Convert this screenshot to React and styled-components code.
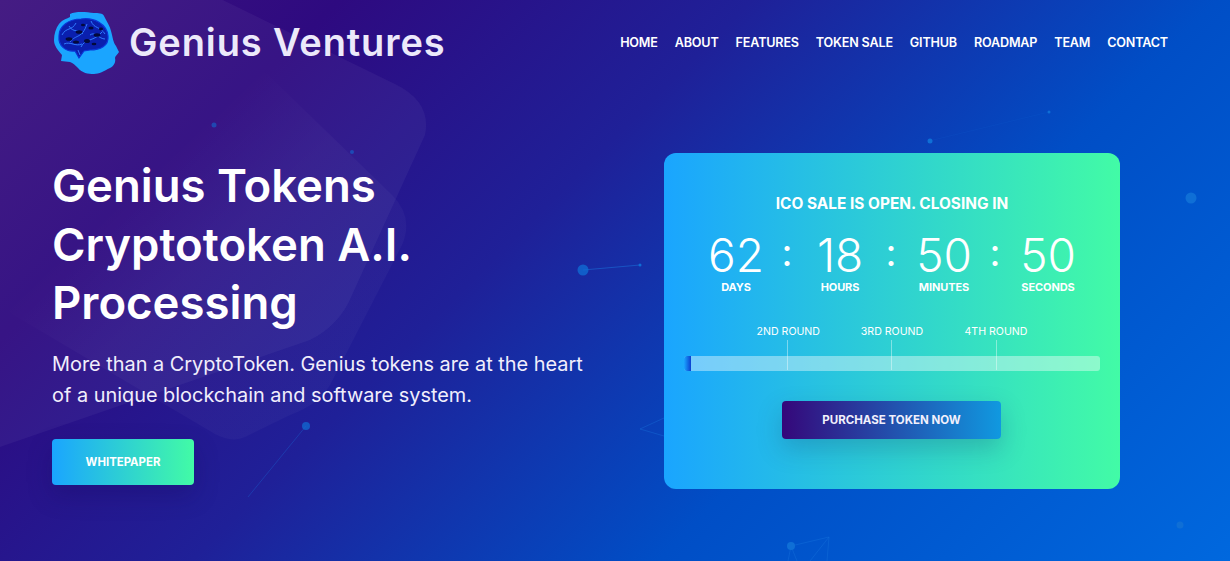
import React from 'react';
import styled, { createGlobalStyle } from 'styled-components';

const GlobalStyle = createGlobalStyle`
    html, body {
        margin: 0;
        padding: 0;
        background: #1a2ba0;
    }
    * {
        box-sizing: border-box;
    }
`;

const FONT = `"Inter", "Noto Sans", "Liberation Sans", sans-serif`;
const GREEN_BLUE = 'linear-gradient(90deg, #1aa5ff 0%, #42fba6 100%)';

const Page = styled.div`
    position: relative;
    width: 1230px;
    height: 561px;
    overflow: hidden;
    font-family: ${FONT};
    color: #fff;
    background: linear-gradient(135deg, #3d127e 0%, #2e0a80 19%, #1f2098 42%, #004ec6 68%, #0068de 100%);
`;

const Backdrop = styled.svg`
    position: absolute;
    inset: 0;
`;

const Content = styled.div`
    position: relative;
`;

const Header = styled.header`
    display: flex;
    align-items: center;
    justify-content: space-between;
    height: 84px;
    padding: 0 62px 0 52px;
`;

const Brand = styled.div`
    display: flex;
    align-items: center;
    gap: 9px;
`;

const BrandName = styled.span`
    font-size: 38px;
    font-weight: 600;
    letter-spacing: 0.88px;
    color: #ece9fa;
`;

const Nav = styled.nav`
    display: flex;
    gap: 17px;
`;

const NavLink = styled.a`
    font-size: 12.6px;
    font-weight: 600;
    letter-spacing: -0.18px;
    color: #fff;
    white-space: nowrap;
`;

const Hero = styled.section`
    display: flex;
    justify-content: space-between;
    padding: 69px 110px 0 52px;
`;

const Intro = styled.div`
    width: 560px;
`;

const Title = styled.h1`
    margin: 4px 0 0;
    font-size: 45.5px;
    line-height: 58.5px;
    font-weight: 600;
`;

const Lead = styled.p`
    margin: 16px 0 0;
    font-size: 19.9px;
    line-height: 31px;
    color: #f1eefc;
`;

const Whitepaper = styled.a`
    display: flex;
    align-items: center;
    justify-content: center;
    width: 142px;
    height: 46px;
    margin-top: 28px;
    border-radius: 4px;
    font-size: 11.4px;
    font-weight: 700;
    background: ${GREEN_BLUE};
    box-shadow: 0 10px 25px rgba(20, 10, 90, 0.28);
`;

const SaleCard = styled.div`
    width: 456px;
    height: 336px;
    padding: 41px 20px 0;
    border-radius: 12px;
    background: ${GREEN_BLUE};
    text-align: center;
`;

const SaleTitle = styled.h3`
    margin: 0;
    font-size: 15.4px;
    line-height: 20px;
    font-weight: 700;
`;

const Countdown = styled.div`
    display: flex;
    justify-content: center;
    margin-top: 16px;
`;

const Unit = styled.div`
    width: 62px;
`;

const Separator = styled.div`
    width: 42px;
    margin-left: -1px;
    margin-right: 1px;
    font-size: 38px;
    font-weight: 400;
    line-height: 44px;
`;

const Digits = styled.div`
    font-size: 46px;
    line-height: 50px;
    font-weight: 300;
`;

const UnitLabel = styled.div`
    font-size: 11px;
    line-height: 14px;
    font-weight: 700;
    letter-spacing: -0.1px;
`;

const RoundLabels = styled.div`
    display: flex;
    justify-content: center;
    gap: 41px;
    margin-top: 31px;
`;

const RoundLabel = styled.span`
    width: 63px;
    font-size: 10.6px;
    line-height: 14px;
    white-space: nowrap;
`;

const Track = styled.div`
    position: relative;
    height: 15px;
    margin-top: 17px;
    border-radius: 3px;
    background: rgba(255, 255, 255, 0.4);
`;

const TrackFill = styled.div`
    height: 100%;
    border-radius: 3px 0 0 3px;
    background: linear-gradient(90deg, #1aa5ff, #0b3fd0);
`;

const Tick = styled.span`
    position: absolute;
    left: ${({ $left }) => $left}px;
    top: -16px;
    bottom: 1px;
    width: 1px;
    background: rgba(255, 255, 255, 0.4);
`;

const PurchaseButton = styled.a`
    display: flex;
    align-items: center;
    justify-content: center;
    width: 219px;
    height: 38px;
    margin: 30px 0 0 98px;
    border-radius: 4px;
    font-size: 11.5px;
    font-weight: 700;
    color: #f2f0fc;
    background: linear-gradient(90deg, #35077a 0%, #1099e0 100%);
    box-shadow: 0 10px 25px rgba(20, 60, 110, 0.25);
`;

const NAV_ITEMS = ['HOME', 'ABOUT', 'FEATURES', 'TOKEN SALE', 'GITHUB', 'ROADMAP', 'TEAM', 'CONTACT'];

const TIMER = [
    { value: '62', label: 'DAYS' },
    { value: '18', label: 'HOURS' },
    { value: '50', label: 'MINUTES' },
    { value: '50', label: 'SECONDS' },
];

const ROUNDS = [
    { label: '2ND ROUND', tick: 103 },
    { label: '3RD ROUND', tick: 207 },
    { label: '4TH ROUND', tick: 312 },
];

const Logo = () => (
    <svg width="68" height="68" viewBox="0 0 68 68">
        <path
            d="M18 6 C24 3 34 4 42 5 C46 5 51 5 52 8 C55 14 58 18 59 23 C61 30 61 34 64 38 L67 44 C65 47 63 48 63 50 C64 54 62 58 58 60 C52 63 47 66 42 66 C36 66 30 65 26 60 C23 57 21 55 18 54 L9 53 L10 47 C6 42 2 38 2 32 C2 26 4 20 7 16 C10 12 14 11 18 9 Z"
            fill="#1aa5ff"
        />
        <path
            d="M7 28 C7 18 17 11 29 11 C42 9 55 16 56 28 C57 38 48 42 38 42 L32 43 L27 50 L23 43 C14 44 6 38 7 28 Z"
            fill="#0a1fae"
            stroke="#0b36d8"
            strokeWidth="1.2"
        />
        <path
            d="M10 27 C14 19 20 23 24 15 M18 34 C24 26 30 31 35 16 M29 39 C33 30 42 34 50 24 M12 36 C19 33 23 39 30 36 M39 13 C42 21 48 18 53 26 M26 42 L28 47 M17 18 C21 25 27 21 31 26 M38 27 C43 23 47 31 53 31"
            fill="none"
            stroke="#2f7bff"
            strokeWidth="1"
        />
        <g fill="#030a3a">
            <ellipse cx="17" cy="31" rx="3.4" ry="1.8" />
            <ellipse cx="27" cy="24" rx="3.4" ry="1.8" />
            <ellipse cx="24" cy="34" rx="3" ry="1.6" />
            <ellipse cx="35" cy="33" rx="3" ry="2" />
            <ellipse cx="45" cy="27" rx="3.4" ry="1.8" />
            <ellipse cx="39" cy="20" rx="2.6" ry="1.6" />
            <ellipse cx="49" cy="21" rx="2" ry="1.4" />
            <ellipse cx="31" cy="17" rx="2" ry="1.2" />
            <ellipse cx="42" cy="36" rx="2.4" ry="1.3" />
        </g>
    </svg>
);

const BackgroundArt = () => (
    <Backdrop width="1230" height="561" viewBox="0 0 1230 561">
        <defs>
            <linearGradient id="innerShape" gradientUnits="userSpaceOnUse" x1="130" y1="187" x2="200" y2="262">
                <stop offset="0" stopColor="#fff" stopOpacity="0" />
                <stop offset="1" stopColor="#fff" stopOpacity="0.03" />
            </linearGradient>
        </defs>
        <path d="M-20 -40 L190 -16 L395 84 Q432 102 425 135 L352 295 Q340 325 310 340 L0 447 L-20 447 Z" fill="#fff" fillOpacity="0.045" />
        <path d="M260 67 L392 195 Q414 217 402 245 L330 385 Q318 405 290 415 L245 437 Q232 443 215 434 L0 307 Z" fill="url(#innerShape)" />
        <g stroke="#1a78e0" fill="none">
            <path d="M583 270 L640 265" strokeOpacity="0.5" />
            <path d="M306 426 L248 497" strokeOpacity="0.3" />
            <path d="M791 546 L829 537 L810 561 M829 537 L827 561 M791 546 L788 561 M791 546 L797 561" strokeOpacity="0.35" />
            <path d="M929 141 L1049 112" strokeOpacity="0.1" />
            <path d="M664 418 L640 429 L664 436" strokeOpacity="0.35" />
        </g>
        <g fill="#0f6fd6">
            <circle cx="583" cy="270" r="5.5" fillOpacity="0.75" />
            <circle cx="640" cy="265" r="1.5" />
            <circle cx="306" cy="426" r="4" fillOpacity="0.7" />
            <circle cx="214" cy="125" r="2.5" fillOpacity="0.55" />
            <circle cx="352" cy="152" r="2" fillOpacity="0.55" />
            <circle cx="930" cy="141" r="2.5" />
            <circle cx="1049" cy="112" r="1.5" />
            <circle cx="1191" cy="198" r="5.5" />
            <circle cx="1180" cy="525" r="3.5" />
            <circle cx="791" cy="546" r="4" />
        </g>
    </Backdrop>
);

export default function App() {
    return (
        <Page>
            <GlobalStyle />
            <BackgroundArt />
            <Content>
                <Header>
                    <Brand>
                        <Logo />
                        <BrandName>Genius Ventures</BrandName>
                    </Brand>
                    <Nav>
                        {NAV_ITEMS.map((item) => <NavLink key={item}>{item}</NavLink>)}
                    </Nav>
                </Header>
                <Hero>
                    <Intro>
                        <Title>Genius Tokens<br />Cryptotoken A.I.<br />Processing</Title>
                        <Lead>More than a CryptoToken. Genius tokens are at the heart<br />of a unique blockchain and software system.</Lead>
                        <Whitepaper>WHITEPAPER</Whitepaper>
                    </Intro>
                    <SaleCard>
                        <SaleTitle>ICO SALE IS OPEN. CLOSING IN</SaleTitle>
                        <Countdown>
                            {TIMER.map((unit, i) => (
                                <React.Fragment key={unit.label}>
                                    {i > 0 && <Separator>:</Separator>}
                                    <Unit>
                                        <Digits>{unit.value}</Digits>
                                        <UnitLabel>{unit.label}</UnitLabel>
                                    </Unit>
                                </React.Fragment>
                            ))}
                        </Countdown>
                        <RoundLabels>
                            {ROUNDS.map((round) => <RoundLabel key={round.label}>{round.label}</RoundLabel>)}
                        </RoundLabels>
                        <Track>
                            <TrackFill style={{ width: '7px' }} />
                            {ROUNDS.map((round) => <Tick key={round.label} $left={round.tick} />)}
                        </Track>
                        <PurchaseButton>PURCHASE TOKEN NOW</PurchaseButton>
                    </SaleCard>
                </Hero>
            </Content>
        </Page>
    );
}
